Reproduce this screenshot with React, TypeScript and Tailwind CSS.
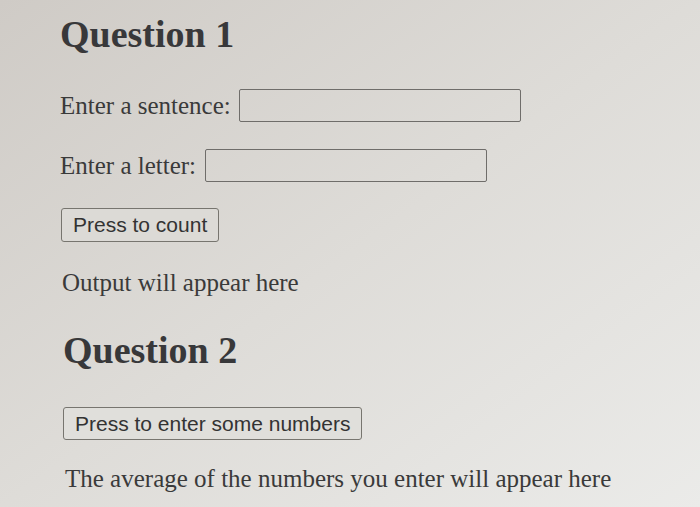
export default function App() {
  const serif = { fontFamily: '"Liberation Serif", "Times New Roman", serif' };
  const sans = { fontFamily: '"Liberation Sans", Arial, sans-serif' };

  return (
    <div
      className="h-[507px] w-[700px] overflow-hidden bg-gradient-to-br from-[#cfcbc6] via-[#dedcd8] to-[#ebebe9] pl-[60px] text-[#3a3a3a]"
      style={serif}
    >
      <h2 className="mt-[12px] text-[38px] font-bold leading-[44px] text-[#38383a]">Question 1</h2>

      <div className="mt-[33px] flex h-[33px] items-center gap-[8px]">
        <span className="text-[25px] leading-[30px]">Enter a sentence:</span>
        <input
          className="h-[33px] w-[282px] rounded-[2px] border-[1.5px] border-[#6f6d6a] bg-transparent"
          type="text"
        />
      </div>

      <div className="mt-[27px] flex h-[33px] items-center gap-[9px]">
        <span className="text-[25px] leading-[30px]">Enter a letter:</span>
        <input
          className="h-[33px] w-[282px] rounded-[2px] border-[1.5px] border-[#6f6d6a] bg-transparent"
          type="text"
        />
      </div>

      <button
        className="mt-[26px] ml-[1px] flex h-[34px] items-center rounded-[3px] border-[1.5px] border-[#77756f] bg-[#dcdad6] px-[11px] text-[21px] text-[#333]"
        style={sans}
      >
        Press to count
      </button>

      <p className="mt-[26px] ml-[2px] text-[25px] leading-[30px]">Output will appear here</p>

      <h2 className="mt-[30px] ml-[3px] text-[38px] font-bold leading-[44px] text-[#38383a]">Question 2</h2>

      <button
        className="mt-[35px] ml-[3px] flex h-[33px] items-center rounded-[3px] border-[1.5px] border-[#77756f] bg-[#e0dfdb] px-[11px] text-[21px] text-[#333]"
        style={sans}
      >
        Press to enter some numbers
      </button>

      <p className="mt-[24px] ml-[5px] text-[25px] leading-[30px]">
        The average of the numbers you enter will appear here
      </p>
    </div>
  );
}
